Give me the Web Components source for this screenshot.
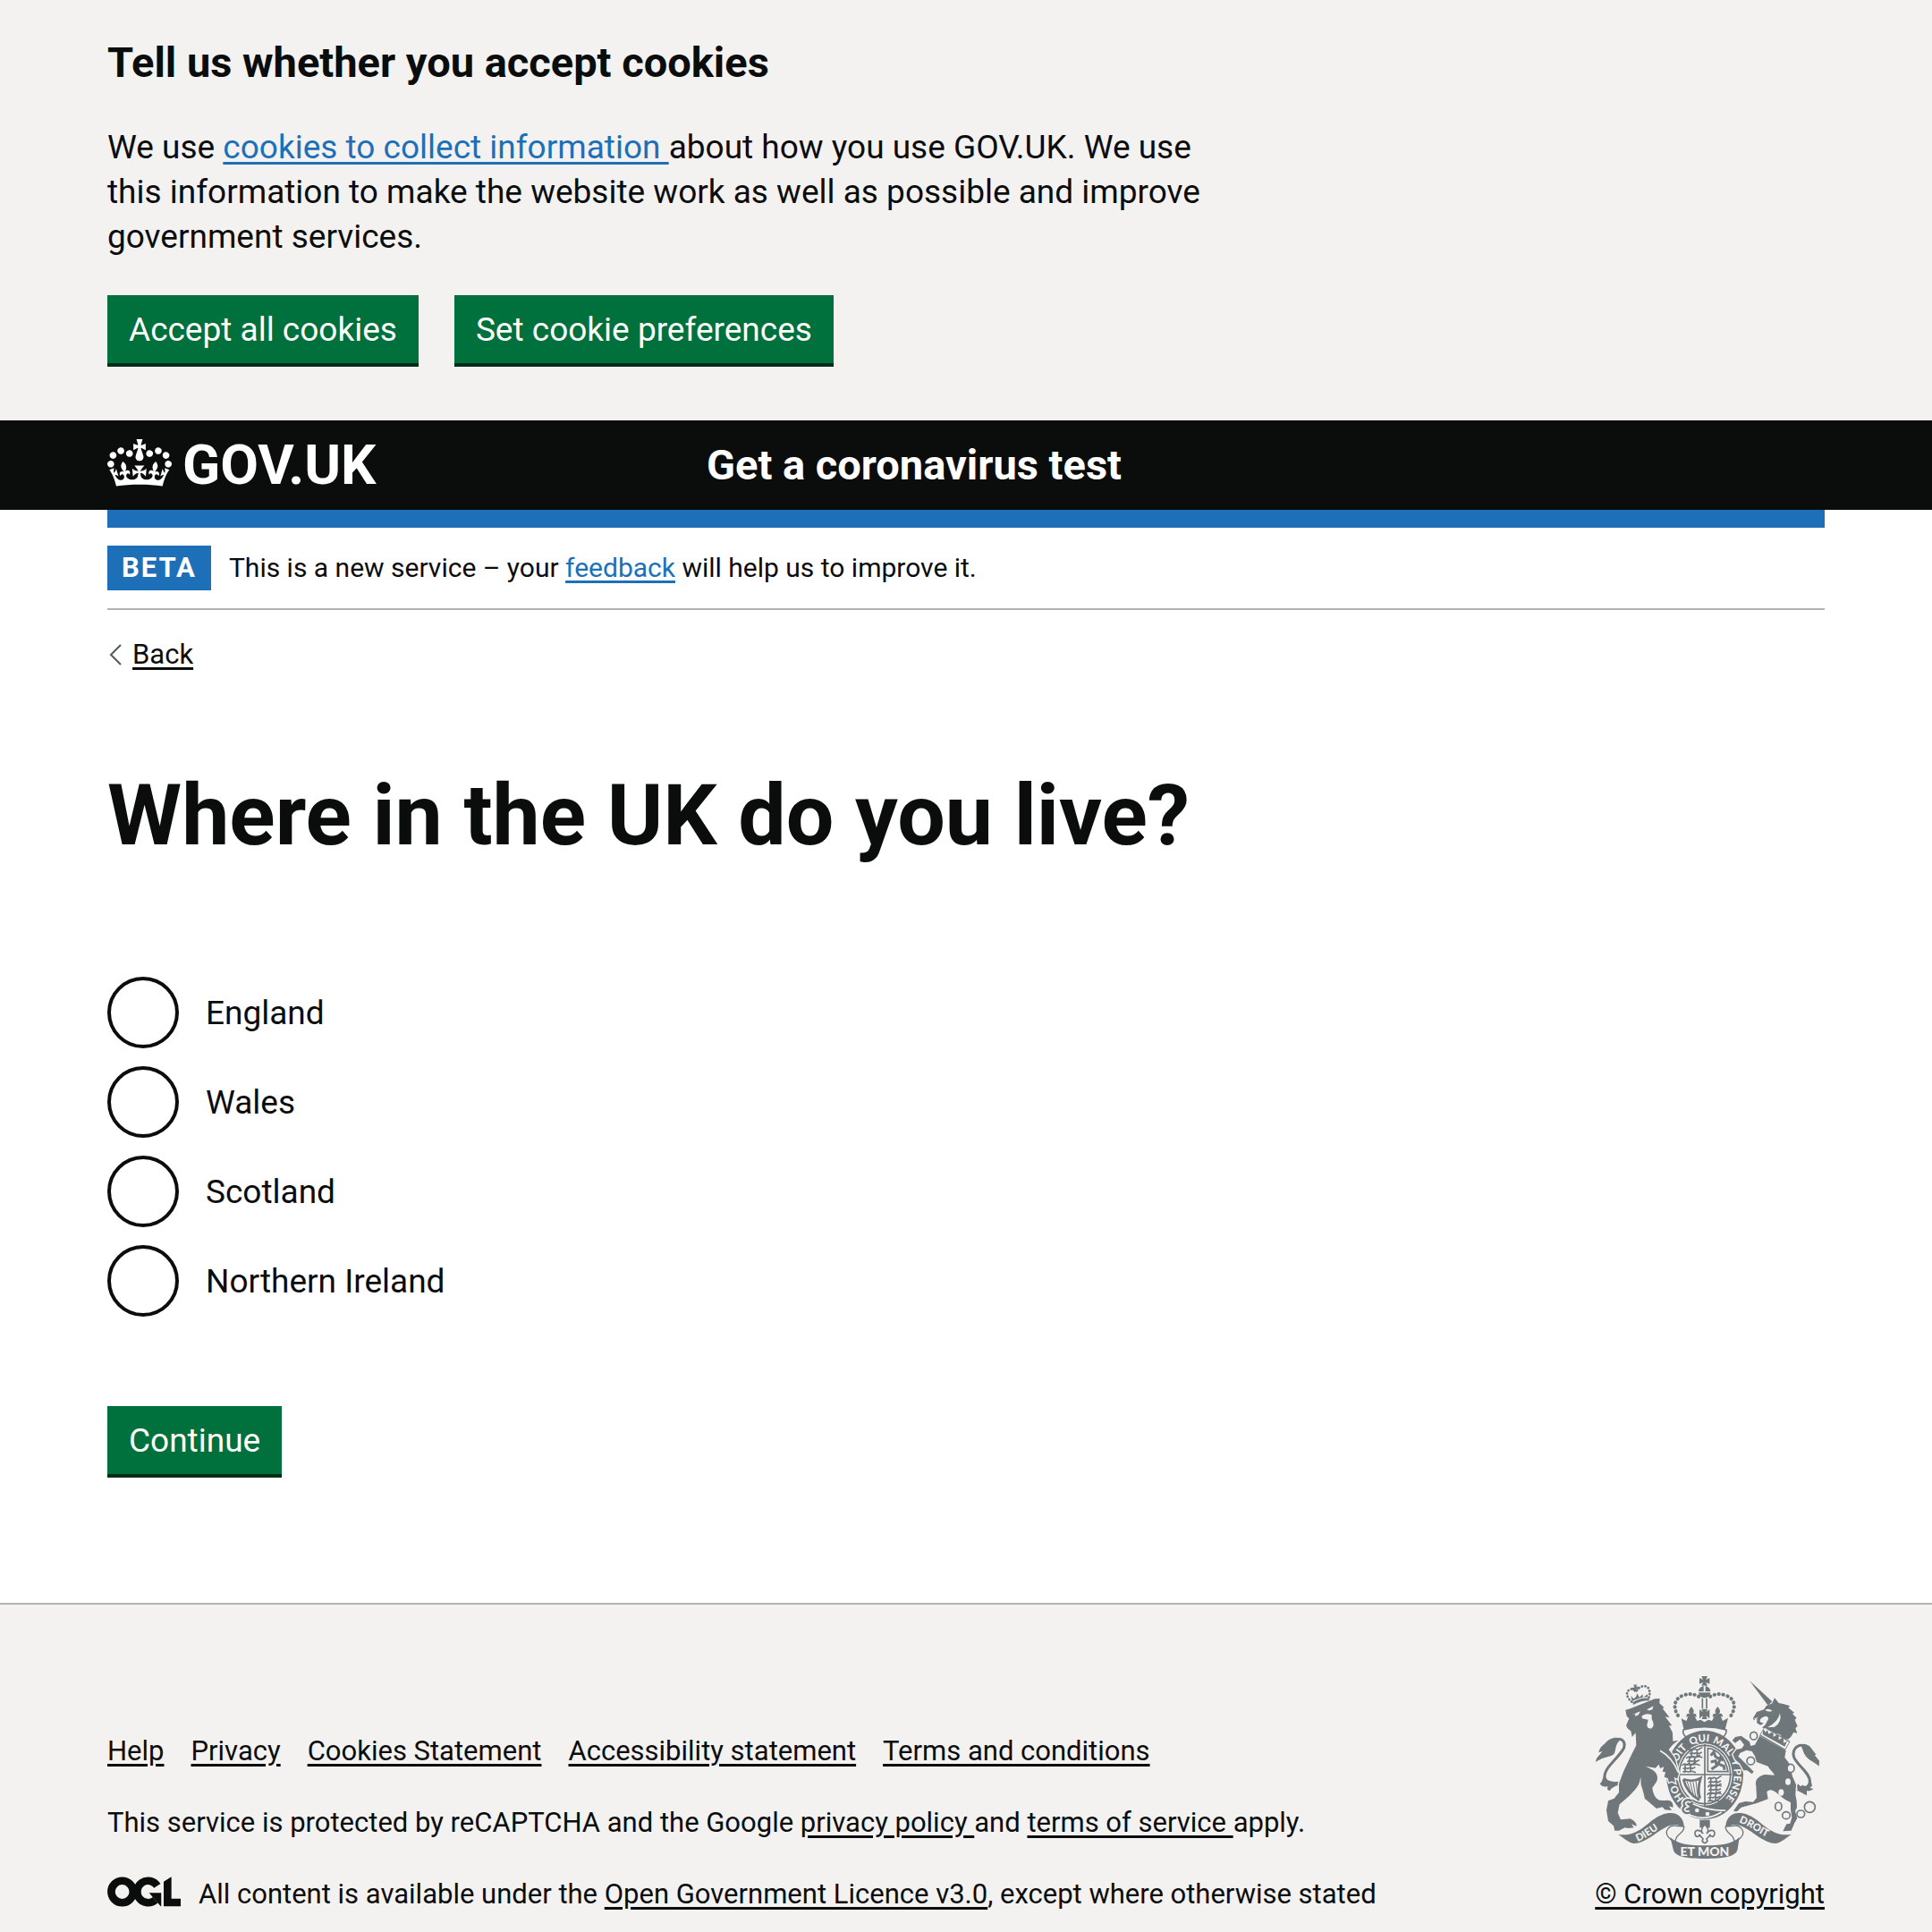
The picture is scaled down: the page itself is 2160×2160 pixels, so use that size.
<!DOCTYPE html>
<html lang="en">
<head>
<meta charset="utf-8">
<title>Where in the UK do you live? - Get a coronavirus test - GOV.UK</title>
<style>
  :root {
    --ink: #0b0c0c;
    --blue: #1d70b8;
    --green: #00703c;
    --grey: #f3f2f1;
    --rule: #b1b4b6;
    --arms: #6f777b;
    --gutter: 120px;
  }
  body {
    margin: 0;
    min-height: 100vh;
    display: flex;
    flex-direction: column;
    background: #fff;
    color: var(--ink);
    font: 37px/50px Roboto, "Liberation Sans", sans-serif;
  }
  site-footer { flex: 1 0 auto; }
</style>
</head>
<body>
<cookie-banner></cookie-banner>
<site-header>Get a coronavirus test</site-header>
<question-page>
  <phase-banner></phase-banner>
</question-page>
<site-footer></site-footer>

<script>
const linkCss = `
  a { color: inherit; text-decoration: underline; text-decoration-thickness: 3px; text-underline-offset: 4px; }
  a.blue { color: var(--blue); }
`;

function define(name, html) {
  const template = document.createElement('template');
  template.innerHTML = html;
  customElements.define(name, class extends HTMLElement {
    constructor() {
      super();
      this.attachShadow({ mode: 'open' }).append(template.content.cloneNode(true));
    }
  });
}

define('gov-button', `
  <style>
    :host { display: block; }
    button {
      display: block; height: 80px; margin: 0; padding: 2px 24px 0; border: 0;
      border-bottom: 4px solid #002d18; border-radius: 0;
      background: var(--green); color: #fff; font: inherit; line-height: 74px; cursor: pointer;
    }
  </style>
  <button type="button"><slot></slot></button>
`);

define('cookie-banner', `
  <style>
    ${linkCss}
    :host { display: block; padding: 40px var(--gutter) 60px; background: var(--grey); }
    h2 { margin: 0 0 40px; font-size: 47px; line-height: 60px; font-weight: 700; }
    p { margin: 0 0 40px; max-width: 1250px; }
    .actions { display: flex; gap: 40px; }
  </style>
  <h2>Tell us whether you accept cookies</h2>
  <p>We use <a class="blue" href="#cookies">cookies to collect information </a>about how you use GOV.UK. We use this information to make the website work as well as possible and improve government services.</p>
  <div class="actions">
    <gov-button>Accept all cookies</gov-button>
    <gov-button>Set cookie preferences</gov-button>
  </div>
`);

define('site-header', `
  <style>
    :host { display: block; background: var(--ink); color: #fff; }
    header { display: flex; align-items: center; gap: 30px; height: 100px; padding: 0 var(--gutter); }
    .logo { flex: 0 0 calc(100% / 3); display: flex; align-items: center; gap: 12px; color: inherit; text-decoration: none; font-size: 62px; line-height: 60px; font-weight: 700; }
    svg { display: block; width: 72px; height: 53px; padding-bottom: 6px; fill: currentColor; }
    .service { color: inherit; text-decoration: none; font-size: 47px; font-weight: 700; }
  </style>
  <header>
    <a class="logo" href="#home">
      <svg viewBox="0 0 132 97" aria-hidden="true"><path fill-rule="evenodd" d="M25 30.2c3.5 1.5 7.7-.2 9.1-3.7 1.5-3.6-.2-7.8-3.9-9.2-3.6-1.4-7.6.3-9.1 3.9-1.4 3.5.3 7.5 3.9 9zM9 39.5c3.6 1.5 7.8-.2 9.2-3.7 1.5-3.6-.2-7.8-3.9-9.1-3.6-1.5-7.6.2-9.1 3.8-1.4 3.5.3 7.5 3.8 9zM4.4 57.2c3.5 1.5 7.7-.2 9.1-3.8 1.5-3.6-.2-7.7-3.9-9.1-3.5-1.5-7.6.3-9.1 3.8-1.4 3.5.3 7.6 3.9 9.1zm38.3-21.4c3.5 1.5 7.7-.2 9.1-3.8 1.5-3.6-.2-7.7-3.9-9.1-3.6-1.5-7.6.3-9.1 3.8-1.3 3.6.4 7.7 3.9 9.1zm64.4-5.6c-3.6 1.5-7.8-.2-9.1-3.7-1.5-3.6.2-7.8 3.8-9.2 3.6-1.4 7.7.3 9.2 3.9 1.3 3.5-.4 7.5-3.9 9zm15.9 9.3c-3.6 1.5-7.7-.2-9.1-3.7-1.5-3.6.2-7.8 3.7-9.1 3.6-1.5 7.7.2 9.2 3.8 1.5 3.5-.3 7.5-3.8 9zm4.7 17.7c-3.6 1.5-7.8-.2-9.2-3.8-1.5-3.6.2-7.7 3.9-9.1 3.6-1.5 7.7.3 9.2 3.8 1.3 3.5-.4 7.6-3.9 9.1zM89.3 35.8c-3.6 1.5-7.8-.2-9.2-3.8-1.4-3.6.2-7.7 3.9-9.1 3.6-1.5 7.7.3 9.2 3.8 1.4 3.6-.3 7.7-3.9 9.1zM69.7 17.7l8.9 4.7V9.3l-8.9 2.8c-.2-.3-.5-.6-.9-.9L72.4 0H59.6l3.5 11.2c-.3.3-.6.5-.9.9l-8.8-2.8v13.1l8.8-4.7c.3.3.6.7.9.9l-5 15.4v.1c-.2.8-.4 1.6-.4 2.4 0 4.1 3.1 7.5 7 8.1h.2c.3 0 .7.1 1 .1.4 0 .7 0 1-.1h.2c4-.6 7.1-4.1 7.1-8.1 0-.8-.1-1.7-.4-2.4V34l-5.1-15.4c.4-.2.7-.6 1-.9zM66 92.8c16.9 0 32.8 1.1 47.1 3.2 4-16.9 8.9-26.7 14-33.5l-9.6-3.4c1 4.9 1.1 7.2 0 10.2-1.5-1.4-3-4.3-4.2-8.7L108.6 76c2.8-2 5-3.2 7.5-3.3-4.4 9.4-10 11.9-13.6 11.2-4.3-.8-6.3-4.6-5.6-7.9 1-4.7 5.7-5.9 8-.5 4.3-8.7-3-11.4-7.6-8.8 7.1-7.2 7.9-13.5 2.1-21.1-8 6.1-8.1 12.3-4.5 20.8-4.7-5.4-12.1-2.5-9.5 6.2 3.4-5.2 7.9-2 7.2 3.1-.6 4.3-6.4 7.8-13.5 7.2-10.3-.9-10.9-8-11.2-13.8 2.5-.5 7.1 1.8 11 7.3L80.2 60c-4.1 4.4-8 5.3-12.3 5.4 1.4-4.4 8-11.6 8-11.6H55.5s6.4 7.2 7.9 11.6c-4.2-.1-8-1-12.3-5.4l1.4 16.4c3.9-5.5 8.5-7.7 10.9-7.3-.3 5.8-.9 12.8-11.1 13.8-7.2.6-12.9-2.9-13.5-7.2-.7-5 3.8-8.3 7.1-3.1 2.7-8.7-4.6-11.6-9.4-6.2 3.7-8.5 3.6-14.7-4.6-20.8-5.8 7.6-5 13.9 2.2 21.1-4.7-2.6-11.9.1-7.7 8.8 2.3-5.5 7.1-4.2 8.1.5.7 3.3-1.3 7.1-5.7 7.9-3.5.7-9-1.8-13.5-11.2 2.5.1 4.7 1.3 7.5 3.3l-4.7-15.4c-1.2 4.4-2.7 7.2-4.3 8.7-1.1-3-.9-5.3 0-10.2l-9.5 3.4c5 6.9 9.9 16.7 14 33.5 14.8-2.1 30.8-3.2 47.7-3.2z"/></svg>
      <span>GOV.UK</span>
    </a>
    <a class="service" href="#service"><slot></slot></a>
  </header>
`);

define('phase-banner', `
  <style>
    ${linkCss}
    :host { display: flex; align-items: center; gap: 20px; padding: 20px 0; border-top: 20px solid var(--blue); border-bottom: 2px solid var(--rule); font-size: 30px; }
    strong { padding: 0 16px; background: var(--blue); color: #fff; font-size: 31px; letter-spacing: 2px; }
  </style>
  <strong>BETA</strong>
  <span>This is a new service – your <a class="blue" href="#feedback">feedback</a> will help us to improve it.</span>
`);

define('back-link', `
  <style>
    ${linkCss}
    :host { display: flex; align-items: center; gap: 12px; font-size: 31px; line-height: 40px; }
    svg { display: block; width: 16px; height: 24px; fill: none; stroke: #505a5f; stroke-width: 2; }
  </style>
  <svg viewBox="0 0 16 24" aria-hidden="true"><path d="M15 1 4 12l11 11"/></svg>
  <a href="#back"><slot></slot></a>
`);

define('radio-group', `
  <style>
    :host { display: block; }
    fieldset { display: grid; gap: 20px; margin: 0; padding: 0; border: 0; min-width: 0; }
    legend { padding: 0; margin: 0 0 130px; }
    h1 { margin: 0; font-size: 95px; line-height: 100px; font-weight: 700; }
    div { display: flex; align-items: center; gap: 30px; }
    input { appearance: none; flex: none; width: 80px; height: 80px; margin: 0; border: 4px solid var(--ink); border-radius: 50%; background: #fff; }
    input:checked { box-shadow: inset 0 0 0 16px #fff; background: var(--ink); }
    label { padding-top: 2px; }
  </style>
  <fieldset>
    <legend><h1><slot></slot></h1></legend>
    <div><input type="radio" name="country" id="england" value="england"><label for="england">England</label></div>
    <div><input type="radio" name="country" id="wales" value="wales"><label for="wales">Wales</label></div>
    <div><input type="radio" name="country" id="scotland" value="scotland"><label for="scotland">Scotland</label></div>
    <div><input type="radio" name="country" id="ni" value="ni"><label for="ni">Northern Ireland</label></div>
  </fieldset>
`);

define('question-page', `
  <style>
    :host { display: block; padding: 0 var(--gutter) 140px; }
    back-link { margin: 30px 0 110px; }
    .form { display: flex; flex-direction: column; align-items: flex-start; gap: 100px; }
  </style>
  <slot></slot>
  <back-link>Back</back-link>
  <main class="form">
    <radio-group>Where in the UK do you live?</radio-group>
    <gov-button>Continue</gov-button>
  </main>
`);

define('royal-arms', `
  <style>
    :host { display: block; }
    svg { display: block; width: 250px; height: 204px; font-family: Lato, "Liberation Sans", sans-serif; font-weight: 900; }
    .f { fill: var(--arms); }
    .b { fill: var(--grey); }
    .s { fill: none; stroke: var(--arms); stroke-width: 5; }
    .w { fill: none; stroke: var(--grey); stroke-width: 5; }
    .edge { stroke: var(--grey); stroke-width: 8; paint-order: stroke; }
    text { fill: var(--grey); font-size: 34px; }
  </style>
  <svg viewBox="72 72 750 612" role="img" aria-label="Royal coat of arms of the United Kingdom">
    <defs>
      <path id="ring" d="M370 484A98 112 0 1 1 506 484"/>
      <path id="left" d="M213 626C245 616 275 585 318 567"/>
      <path id="right" d="M552 562C600 578 620 606 674 622"/>
      <path id="beast" class="s" d="M0 6q6-9 14-3q8-6 14 1l9-4q4-6 9-3M3 17q8-6 16-1q8-6 15 0l10-5M2 28q10-6 18-1l14-2 12 4M10 3v26M28 3v25"/>
      <path id="fleur" class="f" d="M0-22C-10-10-10-4-4 4C-10-2-19 2-16 14L-11 10C-8 16-8 18-10 22H10C8 18 8 16 11 10L16 14C19 2 10-2 4 4C10-4 10-10 0-22Z"/>
    </defs>

    <!-- royal crown -->
    <path class="f" d="M427 72H447L442 84L454 78V98L442 92L447 104H427L432 92L420 98V78L432 84Z"/>
    <path class="f" d="M417 123A20 18 0 0 1 457 123ZM417 127H457A20 18 0 0 1 417 127Z"/>
    <path class="b" d="M434 104h6v19h-6z"/>
    <path class="s" d="M430 146V180M444 146V180"/>
    <g fill="none" stroke="var(--arms)" stroke-width="12" stroke-linecap="round" stroke-dasharray="1 14">
      <path d="M348 204C330 176 336 148 362 138C390 126 412 134 428 148"/>
      <path d="M526 204C544 176 538 148 512 138C484 126 462 134 446 148"/>
    </g>
    <path class="f" d="M359 214L376 222L384 204L393 218L404 206L412 222L424 218L437 226L450 218L462 222L470 206L481 218L490 204L498 222L516 212L506 252Q437 232 368 252Z"/>
    <path class="f" d="M420 184L432 192L426 182H448L442 192L454 184V214L442 204L446 216H428L432 204L420 214Z"/>
    <use href="#fleur" x="393" y="196"/><use href="#fleur" x="481" y="196"/>
    <path class="b" d="M366 252Q437 232 510 252Q512 264 500 276Q437 250 374 276Q362 264 366 252Z" stroke="var(--arms)" stroke-width="5"/>

    <!-- garter and quartered shield -->
    <ellipse class="f" cx="438" cy="403" rx="129" ry="149"/>
    <ellipse class="b" cx="438" cy="402" rx="92" ry="104"/>
    <ellipse class="s" cx="438" cy="402" rx="86" ry="98"/>
    <path class="s" d="M438 300V508M348 402H528"/>
    <path class="s" d="M448 392V314C480 316 506 344 516 392Z"/>
    <path class="s" style="stroke-width:9" d="M458 338L468 326L474 342L490 352L482 366L502 374L504 386M458 360L474 356L478 372L460 384M488 340L500 356"/>
    <use href="#beast" x="384" y="316"/><use href="#beast" x="376" y="342"/><use href="#beast" x="362" y="366"/>
    <use href="#beast" x="448" y="412"/><use href="#beast" x="448" y="438"/><use href="#beast" x="446" y="464"/>
    <path class="s" style="stroke-width:8" d="M366 418Q400 428 424 414Q412 452 422 482M366 418Q378 464 420 488"/>
    <path class="s" style="stroke-width:3" d="M378 424L392 464M388 424L400 472M398 424L408 480M408 422L415 482"/>
    <text><textPath href="#ring" startOffset="2">HO</textPath></text>
    <text><textPath href="#ring" startOffset="112">SOIT</textPath></text>
    <text><textPath href="#ring" startOffset="204">QUI</textPath></text>
    <text><textPath href="#ring" startOffset="278">MAL</textPath></text>
    <text><textPath href="#ring" startOffset="368">Y</textPath></text>
    <text><textPath href="#ring" startOffset="398">PENSE</textPath></text>
    <path class="w" d="M388 538Q440 560 494 528M398 500Q450 524 508 522"/>
    <g class="b"><circle cx="412" cy="522" r="7"/><circle cx="447" cy="534" r="7"/></g>
    <path d="M394 490C372 480 360 498 372 508C356 516 366 536 388 530" fill="none" stroke="var(--grey)" stroke-width="18"/>
    <path class="s" style="stroke-width:7" d="M394 490C372 480 360 498 372 508C356 516 366 536 388 530"/>

    <!-- lion -->
    <path class="s" style="stroke-width:9" d="M160 430C134 440 104 434 102 408C102 376 152 344 167 312C172 292 162 282 148 283"/>
    <path class="f" d="M155 281C135 274 116 282 104 297C92 306 84 314 82 328L94 324C86 338 74 342 72 360C90 346 112 344 130 336C142 328 134 306 151 289ZM98 408C92 428 90 432 86 430C88 442 102 444 114 442C108 450 112 456 120 456C124 444 150 440 158 424C130 430 106 422 98 408Z"/>
    <path class="f edge" d="M172 185L188 181L270 148L287 147L286 163L302 178L296 180L320 211L305 208L328 238L318 238L330 262L331 290L349 287L330 302L317 318L337 346L344 372L351 398L345 416L335 410L339 430L327 424L318 428L314 414L302 410L306 394L296 392L301 376L288 381L284 368L272 380L240 374L258 384C276 392 284 410 276 426L262 446C264 466 272 482 286 488L302 489L314 488C326 488 334 500 331 512L318 508L327 522L304 520L296 511L276 516L234 480L238 486L228 448C220 430 226 420 222 412C220 438 206 452 184 474L152 502L146 530L156 553L188 550C200 556 212 566 208 575L192 568L200 580L182 582L170 580L150 590L136 590L132 574L114 558L108 522L114 490L134 482L150 462L150 432L166 390L190 340L208 304L206 262L194 276L190 256L180 248L174 238L184 214L176 206Z"/>
    <path class="b" d="M194 201L222 190L215 202Q200 212 206 198ZM244 184L266 172L262 184Q248 190 244 184ZM226 206Q242 194 260 202L260 216Q272 236 260 247Q246 250 244 236L248 218L228 214Z"/>
    <path class="w" d="M288 322C318 338 336 362 350 396"/>
    <path class="f" d="M190 137L199 148L207 142L211 130L219 143L229 133L231 144L246 132L247 142Q220 142 194 156Z"/>
    <path class="f" d="M196 160Q222 142 249 146L253 154Q226 152 198 168Z"/>
    <path class="f" d="M199 101L210 100L208 108L215 106L216 116L208 115L210 124L201 125L202 116L194 119L192 110L202 110Z"/>
    <path d="M193 158C178 146 172 128 182 120C190 112 200 114 204 122M210 120C220 104 242 100 250 114C256 128 252 136 250 146" fill="none" stroke="var(--arms)" stroke-width="8" stroke-linecap="round" stroke-dasharray="1 10"/>

    <!-- unicorn -->
    <path class="s" style="stroke-width:9" d="M760 303C738 308 730 328 738 346C752 374 790 396 790 424C790 444 776 450 762 440M700 392C720 420 736 440 764 448"/>
    <path class="f" d="M741 314C752 294 780 296 792 310L812 336L806 336L822 356L821 374C806 360 790 356 778 342C766 328 766 308 757 304ZM750 432C760 450 786 448 792 414L798 440L790 446L802 450C794 458 784 458 780 456L780 472C768 466 752 456 748 456Z"/>
    <path class="f" d="M588 87L664 157L650 170Z"/>
    <path class="f" d="M664 163L672 145L686 162L704 166L724 172L718 178L738 194L732 198L746 212L740 218L749 240L742 246L748 264L736 260L728 274L718 284L700 280L690 268L672 262L652 252L630 244L640 236L652 214L646 206C630 208 620 216 624 226L636 230L624 236L612 228L614 216L602 220L600 212L612 192L636 184L644 172Z"/>
    <path class="b" d="M640 186Q652 178 664 188Q654 194 640 186ZM690 196Q698 226 672 242L648 244Q684 226 690 196ZM604 214L618 210L606 220Z"/>
    <path class="f edge" d="M622 272L710 322L706 344L722 366L732 408L744 436L742 470L746 490L747 512L741 524L748 548L738 566L728 590L700 592L712 568L724 566L730 546L726 520L726 496L704 484L680 464C666 452 654 450 646 460L650 484L612 498L560 512L546 526L534 524L552 498L574 492L600 494L612 480L610 440C604 420 620 404 642 402L672 404C666 392 656 386 650 374L612 360L606 340L596 324L578 320L556 330L550 342L558 348L588 378L602 392L596 400L580 388L568 388L556 366L540 352L532 334L544 318L562 314L570 302L556 284L540 296L530 288L540 276L560 272L588 292L592 306L606 302Z"/>
    <path d="M630 256L716 306" stroke="var(--arms)" stroke-width="34"/>
    <path d="M632 257L714 305" stroke="var(--grey)" stroke-width="27"/>
    <path class="f" d="M632 267L634 250L642 260L648 252L652 266L662 260L668 264L668 276L680 268L686 272L686 286L698 278L702 284L702 296L714 290L706 308Z"/>
    <g class="b"><ellipse cx="717" cy="426" rx="9" ry="11"/><ellipse cx="694" cy="462" rx="9" ry="11"/></g>
    <g class="s"><ellipse cx="602" cy="272" rx="12" ry="13"/><ellipse cx="592" cy="356" rx="13" ry="13"/><ellipse class="b" cx="726" cy="381" rx="12" ry="14"/><ellipse cx="685" cy="509" rx="11" ry="14"/><ellipse cx="711" cy="539" rx="13" ry="12"/><ellipse cx="760" cy="534" rx="13" ry="12"/><circle cx="790" cy="511" r="18"/></g>

    <!-- motto ribbon -->
    <path class="f" d="M421 554H455V580H421Z"/>
    <path class="b" stroke="var(--arms)" stroke-width="5" d="M438 568C424 584 424 592 432 600C420 582 400 588 406 604C410 614 420 610 420 602C422 612 430 612 432 618A8 8 0 1 0 444 618C446 612 454 612 456 602C456 610 466 614 470 604C476 588 456 582 444 600C452 592 452 584 438 568Z"/>
    <path class="b" stroke="var(--arms)" stroke-width="4" d="M340 574C320 570 304 590 312 606C318 616 328 624 340 630C336 600 372 600 368 576ZM536 574C556 570 572 590 564 606C558 616 548 624 536 630C540 600 504 600 508 576Z"/>
    <path class="f" d="M148 603C185 608 212 596 244 570C272 546 296 530 326 531C352 532 368 552 368 578C354 570 330 566 308 578C272 596 236 634 200 633C180 630 166 614 148 603Z"/>
    <path class="f" d="M728 603C691 608 664 596 632 570C604 546 580 530 550 531C524 532 508 552 508 578C522 570 546 566 568 578C604 596 640 634 676 633C696 630 710 614 728 603Z"/>
    <path class="f" d="M322 612C346 636 390 640 438 640C486 640 530 636 554 612L548 652C544 678 500 684 438 684C376 684 336 678 332 652Z"/>
    <text><textPath href="#left">DIEU</textPath></text>
    <text><textPath href="#right">DROIT</textPath></text>
    <text x="438" y="676" text-anchor="middle" style="font-size:42px">ET MON</text>
  </svg>
`);

define('site-footer', `
  <style>
    ${linkCss}
    :host { display: block; border-top: 2px solid var(--rule); background: var(--grey); font-size: 31px; line-height: 40px; }
    footer { display: flex; align-items: flex-end; justify-content: space-between; gap: 60px; padding: 80px var(--gutter) 20px; }
    ul { display: flex; gap: 30px; margin: 0; padding: 0; list-style: none; }
    .meta { display: flex; flex-direction: column; gap: 40px; }
    p { margin: 0; }
    .licence { display: flex; align-items: center; gap: 20px; }
    .ogl { display: block; width: 82px; height: 34px; padding-bottom: 6px; }
    .crown { display: flex; flex-direction: column; align-items: flex-end; gap: 20px; }
    royal-arms { margin-right: 6px; }
  </style>
  <footer>
    <div class="meta">
      <ul>
        <li><a href="#help">Help</a></li>
        <li><a href="#privacy">Privacy</a></li>
        <li><a href="#cookies">Cookies Statement</a></li>
        <li><a href="#accessibility">Accessibility statement</a></li>
        <li><a href="#terms">Terms and conditions</a></li>
      </ul>
      <p>This service is protected by reCAPTCHA and the Google <a href="#g-privacy">privacy policy </a>and <a href="#g-terms">terms of service </a>apply.</p>
      <div class="licence">
        <svg class="ogl" viewBox="0 0 483 196" role="img" aria-label="Open Government Licence logo" fill="none" stroke="#0b0c0c" stroke-width="51">
          <circle cx="98" cy="98" r="72"/>
          <path d="M329 59A72 72 0 1 0 316 152"/>
          <path fill="#0b0c0c" stroke="none" d="M275 106h80v88h-3l-53-61zM371 32 422 0v143h61v51H371z"/>
        </svg>
        <p>All content is available under the <a href="#ogl">Open Government Licence v3.0</a>, except where otherwise stated</p>
      </div>
    </div>
    <div class="crown">
      <royal-arms></royal-arms>
      <a href="#copyright">© Crown copyright</a>
    </div>
  </footer>
`);
</script>
</body>
</html>
